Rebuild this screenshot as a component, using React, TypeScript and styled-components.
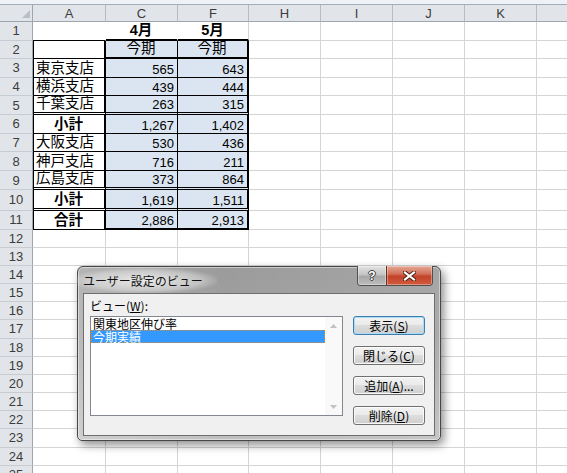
import React from 'react';
import styled, { createGlobalStyle } from 'styled-components';

const GlobalStyle = createGlobalStyle`
  html, body {
    margin: 0;
    padding: 0;
    background: #fff;
    overflow: hidden;
  }
  body {
    font-family: 'Liberation Sans', 'Noto Sans CJK JP', sans-serif;
  }
`;

type Edge = 'grid' | 'none' | 'thin' | 'medium' | 'double';

const edge = (e: Edge) =>
  ({
    grid: '1px solid #d4d4d4',
    none: '1px solid transparent',
    thin: '1px solid #000',
    medium: '2px solid #000',
    double: '3px double #000',
  })[e];

// last column (L) is only partly on screen, its letter falls outside
const COLS = ['A', 'C', 'F', 'H', 'I', 'J', 'K', ''];
const FILL = '#dbe5f1';

// Excel row heights are not quite even in the shot (double borders push some rows)
const rowHeights = [
  18.6, 18.6, 18.6, 18.6, 18.6, 18.75, 18.75, 18.75, 18.75, 21, 19,
  18.1, 18.1, 18.1, 18.1, 18.1, 18.1, 18.1, 18.1, 18.1,
  18.25, 18.25, 18.25, 18.25, 18.25,
];

const Page = styled.div`
  position: relative;
  width: 567px;
  height: 473px;
  overflow: hidden;
  background: #fff;
`;

const TopStrip = styled.div`
  height: 4px;
  background: #eef1f5;
  border-bottom: 1px solid #a3adb9;
`;

const Sheet = styled.div`
  display: grid;
  grid-template-columns: 33px 73px 72px 71px 72px 72px 72px 72px 72px;
  grid-template-rows: 17px ${rowHeights.map((h) => `${h}px`).join(' ')};
`;

const Corner = styled.div`
  box-sizing: border-box;
  background: #e1e5ea;
  border-right: 1px solid #9da5ae;
  border-bottom: 1px solid #9da5ae;
  display: flex;
  align-items: flex-end;
  justify-content: flex-end;
  padding: 0 2px 3px 0;
`;

const ColHead = styled.div`
  box-sizing: border-box;
  background: #e1e5ea;
  border-right: 1px solid #b7bcc2;
  border-bottom: 1px solid #9da5ae;
  display: flex;
  align-items: center;
  justify-content: center;
  font-size: 13px;
  color: #3c3c3c;
`;

const RowHead = styled.div`
  box-sizing: border-box;
  background: #e1e5ea;
  border-right: 1px solid #9da5ae;
  border-bottom: 1px solid #c7ccd2;
  display: flex;
  align-items: center;
  justify-content: center;
  font-size: 13px;
  color: #3c3c3c;
`;

const Cell = styled.div<{
  $r: Edge;
  $b: Edge;
  $l?: Edge;
  $fill?: string;
  $align?: 'flex-start' | 'center' | 'flex-end';
  $bold?: boolean;
  $num?: boolean;
}>`
  box-sizing: border-box;
  border-right: ${(p) => edge(p.$r)};
  border-bottom: ${(p) => edge(p.$b)};
  border-left: ${(p) => (p.$l ? edge(p.$l) : 'none')};
  background: ${(p) => p.$fill ?? '#fff'};
  display: flex;
  align-items: flex-end;
  justify-content: ${(p) => p.$align ?? 'flex-start'};
  padding: 0 3px 0 2px;
  font-size: ${(p) => (p.$num ? '13px' : '14.5px')};
  line-height: ${(p) => (p.$num ? '15px' : '17px')};
  font-weight: ${(p) => (p.$bold ? 700 : 400)};
  white-space: nowrap;
  overflow: hidden;
  color: #000;
`;

type Kind = 'title' | 'sub' | 'branch' | 'total';

interface Row {
  a: string;
  c: string;
  f: string;
  kind: Kind;
  aBottom: Edge;
  vBottom: Edge;
}

const rows: Row[] = [
  { a: '', c: '4月', f: '5月', kind: 'title', aBottom: 'thin', vBottom: 'medium' },
  { a: '', c: '今期', f: '今期', kind: 'sub', aBottom: 'thin', vBottom: 'medium' },
  { a: '東京支店', c: '565', f: '643', kind: 'branch', aBottom: 'thin', vBottom: 'thin' },
  { a: '横浜支店', c: '439', f: '444', kind: 'branch', aBottom: 'thin', vBottom: 'thin' },
  { a: '千葉支店', c: '263', f: '315', kind: 'branch', aBottom: 'double', vBottom: 'double' },
  { a: '小計', c: '1,267', f: '1,402', kind: 'total', aBottom: 'thin', vBottom: 'thin' },
  { a: '大阪支店', c: '530', f: '436', kind: 'branch', aBottom: 'thin', vBottom: 'thin' },
  { a: '神戸支店', c: '716', f: '211', kind: 'branch', aBottom: 'thin', vBottom: 'thin' },
  { a: '広島支店', c: '373', f: '864', kind: 'branch', aBottom: 'double', vBottom: 'double' },
  { a: '小計', c: '1,619', f: '1,511', kind: 'total', aBottom: 'double', vBottom: 'double' },
  { a: '合計', c: '2,886', f: '2,913', kind: 'total', aBottom: 'thin', vBottom: 'medium' },
];

const TableRow: React.FC<{ row: Row }> = ({ row }) => {
  const head = row.kind === 'title';
  const valAlign = row.kind === 'title' || row.kind === 'sub' ? 'center' : 'flex-end';
  const isNum = row.kind === 'branch' || row.kind === 'total';
  return (
    <>
      <Cell
        $l={head ? undefined : 'thin'}
        $r={head ? 'none' : 'medium'}
        $b={row.aBottom}
        $align={row.kind === 'total' ? 'center' : 'flex-start'}
        $bold={row.kind === 'total'}
      >
        {row.a}
      </Cell>
      <Cell
        $r={head ? 'none' : 'thin'}
        $b={row.vBottom}
        $fill={head ? undefined : FILL}
        $align={valAlign}
        $bold={head}
        $num={isNum}
      >
        {row.c}
      </Cell>
      <Cell
        $r={head ? 'grid' : 'medium'}
        $b={row.vBottom}
        $fill={head ? undefined : FILL}
        $align={valAlign}
        $bold={head}
        $num={isNum}
      >
        {row.f}
      </Cell>
    </>
  );
};

/* ---------- dialog ---------- */

const Dialog = styled.div`
  position: absolute;
  left: 77px;
  top: 266px;
  width: 364px;
  height: 175px;
  box-sizing: border-box;
  display: flex;
  flex-direction: column;
  padding: 0 5px 4px 5px;
  border: 1px solid #474747;
  border-radius: 6px 6px 5px 5px;
  background:
    linear-gradient(90deg, rgba(255, 255, 255, 0.25) 0%, rgba(255, 255, 255, 0) 40%, rgba(255, 255, 255, 0.1) 100%),
    linear-gradient(180deg, #9b9b9b 0%, #a2a2a2 40%, #c0c0c0 100%);
  box-shadow:
    inset 0 0 0 1px rgba(255, 255, 255, 0.45),
    3px 4px 10px rgba(0, 0, 0, 0.45);
  z-index: 10;
`;

const TitleBar = styled.div`
  position: relative;
  height: 26px;
  flex: none;
  display: flex;
  align-items: center;
`;

const Title = styled.span`
  font-family: 'Noto Sans CJK JP', sans-serif;
  font-size: 12px;
  color: #111;
  margin-left: -11px;
  padding: 4px 14px 4px 11px;
  background: radial-gradient(ellipse at center, rgba(255, 255, 255, 0.75) 0%, rgba(255, 255, 255, 0.35) 55%, rgba(255, 255, 255, 0) 75%);
`;

const CaptionButtons = styled.div`
  position: absolute;
  top: -1px;
  right: 2px;
  display: flex;
  height: 19px;
  border: 1px solid #4f4f4f;
  border-top: none;
  border-radius: 0 0 4px 4px;
  overflow: hidden;
`;

const CaptionButton = styled.div<{ $close?: boolean }>`
  box-sizing: border-box;
  width: ${(p) => (p.$close ? '46px' : '28px')};
  display: flex;
  align-items: center;
  justify-content: center;
  border-left: ${(p) => (p.$close ? '1px solid #6a2a1c' : 'none')};
  background: ${(p) =>
    p.$close
      ? 'linear-gradient(180deg, #e5a895 0%, #d3725a 40%, #c2432a 55%, #d25b3d 100%)'
      : 'linear-gradient(180deg, #e2e2e2 0%, #c4c4c4 45%, #a7a7a7 55%, #bdbdbd 100%)'};
  box-shadow: inset 0 0 0 1px rgba(255, 255, 255, 0.35);
`;

const Help = styled.span`
  font-family: 'Liberation Sans', sans-serif;
  font-weight: 700;
  font-size: 12px;
  line-height: 12px;
  color: #fff;
  text-shadow:
    1px 0 0 #3a3a3a, -1px 0 0 #3a3a3a, 0 1px 0 #3a3a3a, 0 -1px 0 #3a3a3a;
`;

const Client = styled.div`
  flex: 1;
  display: flex;
  gap: 10px;
  padding: 5px 8px 0 6px;
  background: #f0f0f0;
  border: 1px solid #6e6e6e;
  font-family: 'Noto Sans CJK JP', sans-serif;
  font-size: 12px;
  color: #000;
`;

const ListColumn = styled.div`
  display: flex;
  flex-direction: column;
  width: 253px;
`;

const Label = styled.div`
  height: 17px;
  line-height: 14px;
`;

const Mnemonic = styled.span`
  text-decoration: underline;
  text-underline-offset: 1px;
`;

const ListBox = styled.div`
  box-sizing: border-box;
  height: 100px;
  display: flex;
  background: #fff;
  border: 1px solid #828790;
`;

const Items = styled.div`
  flex: 1;
  display: flex;
  flex-direction: column;
`;

const Item = styled.div<{ $selected?: boolean }>`
  box-sizing: border-box;
  height: 13px;
  line-height: 11px;
  padding-left: 1px;
  white-space: nowrap;
  color: ${(p) => (p.$selected ? '#fff' : '#000')};
  background: ${(p) => (p.$selected ? '#3399ff' : 'transparent')};
  border: 1px ${(p) => (p.$selected ? 'dotted #d08a3c' : 'solid transparent')};
`;

const ScrollBar = styled.div`
  width: 17px;
  display: flex;
  flex-direction: column;
  justify-content: space-between;
  background: #f9f9f9;
`;

const ArrowBox = styled.div`
  height: 17px;
  display: flex;
  align-items: center;
  justify-content: center;
`;

const ButtonColumn = styled.div`
  display: flex;
  flex-direction: column;
  gap: 11px;
  padding-top: 17px;
  width: 72px;
`;

const Button = styled.div<{ $default?: boolean }>`
  box-sizing: border-box;
  height: 19px;
  display: flex;
  align-items: center;
  justify-content: center;
  line-height: 12px;
  border: 1px solid ${(p) => (p.$default ? '#3c7fb1' : '#707070')};
  border-radius: 3px;
  background: linear-gradient(180deg, #f2f2f2 0%, #ebebeb 45%, #dddddd 50%, #cfcfcf 100%);
  box-shadow: inset 0 0 0 1px ${(p) => (p.$default ? '#a8dcf6' : 'rgba(255, 255, 255, 0.8)')};
`;

const Arrow: React.FC<{ down?: boolean }> = ({ down }) => (
  <svg width="7" height="4" viewBox="0 0 7 4">
    <polygon points={down ? '0,0 7,0 3.5,4' : '0,4 7,4 3.5,0'} fill="#c2c2c2" />
  </svg>
);

const CloseGlyph = () => (
  <svg width="13" height="10" viewBox="0 0 13 10">
    <path d="M2 1.5 L11 8.5 M11 1.5 L2 8.5" stroke="#4a1d12" strokeWidth="4" strokeLinecap="square" />
    <path d="M2 1.5 L11 8.5 M11 1.5 L2 8.5" stroke="#fff" strokeWidth="2.2" strokeLinecap="square" />
  </svg>
);

const CustomViewsDialog = () => (
  <Dialog>
    <TitleBar>
      <Title>ユーザー設定のビュー</Title>
      <CaptionButtons>
        <CaptionButton>
          <Help>?</Help>
        </CaptionButton>
        <CaptionButton $close>
          <CloseGlyph />
        </CaptionButton>
      </CaptionButtons>
    </TitleBar>
    <Client>
      <ListColumn>
        <Label>
          ビュー(<Mnemonic>W</Mnemonic>):
        </Label>
        <ListBox>
          <Items>
            <Item>関東地区伸び率</Item>
            <Item $selected>今期実績</Item>
          </Items>
          <ScrollBar>
            <ArrowBox>
              <Arrow />
            </ArrowBox>
            <ArrowBox>
              <Arrow down />
            </ArrowBox>
          </ScrollBar>
        </ListBox>
      </ListColumn>
      <ButtonColumn>
        <Button $default>
          表示(<Mnemonic>S</Mnemonic>)
        </Button>
        <Button>
          閉じる(<Mnemonic>C</Mnemonic>)
        </Button>
        <Button>
          追加(<Mnemonic>A</Mnemonic>)...
        </Button>
        <Button>
          削除(<Mnemonic>D</Mnemonic>)
        </Button>
      </ButtonColumn>
    </Client>
  </Dialog>
);

export default function App() {
  return (
    <Page>
      <GlobalStyle />
      <TopStrip />
      <Sheet>
        <Corner>
          <svg width="8" height="8" viewBox="0 0 8 8">
            <polygon points="8,0 8,8 0,8" fill="#b9bec4" />
          </svg>
        </Corner>
        {COLS.map((c, i) => (
          <ColHead key={i}>{c}</ColHead>
        ))}
        {rowHeights.map((_, i) => {
          const row = rows[i];
          return (
            <React.Fragment key={i}>
              <RowHead>{i + 1}</RowHead>
              {row ? (
                <TableRow row={row} />
              ) : (
                <>
                  <Cell $r="grid" $b="grid" />
                  <Cell $r="grid" $b="grid" />
                  <Cell $r="grid" $b="grid" />
                </>
              )}
              {COLS.slice(3).map((c, j) => (
                <Cell key={j} $r="grid" $b="grid" />
              ))}
            </React.Fragment>
          );
        })}
      </Sheet>
      <CustomViewsDialog />
    </Page>
  );
}
